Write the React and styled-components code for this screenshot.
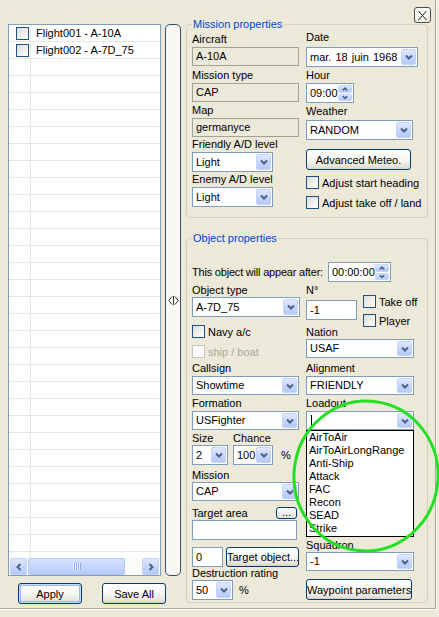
import styled, { createGlobalStyle } from "styled-components";

const flights = ["Flight001 - A-10A", "Flight002 - A-7D_75"];
const loadouts = [
  "AirToAir",
  "AirToAirLongRange",
  "Anti-Ship",
  "Attack",
  "FAC",
  "Recon",
  "SEAD",
  "Strike",
];

function Chevron({ dir = "down", small }) {
  const vertical = dir === "down" || dir === "up";
  const pts = {
    down: "1,1.5 4,4.5 7,1.5",
    up: "1,4.5 4,1.5 7,4.5",
    left: "4.5,1 1.5,4 4.5,7",
    right: "1.5,1 4.5,4 1.5,7",
  }[dir];
  const w = vertical ? 8 : 6;
  const h = vertical ? 6 : 8;
  return (
    <svg
      width={small ? w * 0.75 : w}
      height={small ? h * 0.75 : h}
      viewBox={`0 0 ${w} ${h}`}
    >
      <polyline points={pts} fill="none" stroke="#4d6185" strokeWidth="2" />
    </svg>
  );
}

function Combo({ value, w = 108, h = 19, mt = 0, children }) {
  return (
    <ComboBox $w={w} $h={h} $mt={mt}>
      <ComboText $h={h}>{value}</ComboText>
      <DropButton>
        <Chevron />
      </DropButton>
      {children}
    </ComboBox>
  );
}

function Spinner({ value, w, h = 20, mt = 0 }) {
  return (
    <ComboBox $w={w} $h={h} $mt={mt}>
      <ComboText $h={h}>{value}</ComboText>
      <SpinButtons>
        <SpinHalf>
          <Chevron dir="up" small />
        </SpinHalf>
        <SpinHalf>
          <Chevron dir="down" small />
        </SpinHalf>
      </SpinButtons>
    </ComboBox>
  );
}

function Check({ label, disabled, mt = 0 }) {
  return (
    <CheckRow $mt={mt} $disabled={disabled}>
      <CheckBox $disabled={disabled} />
      {label}
    </CheckRow>
  );
}

export default function App() {
  const rows = Array.from({ length: 32 }, (_, i) => flights[i] || "");

  return (
    <>
      <GlobalStyle />
      <Page>
        <Window>
          <LeftPane>
            <ListArea>
              <ListBox>
                <Rows>
                  {rows.map((name, i) => (
                    <Row key={i}>
                      <CheckCell>{name && <CheckBox />}</CheckCell>
                      <NameCell>{name}</NameCell>
                    </Row>
                  ))}
                </Rows>
                <HScroll>
                  <ScrollArrow>
                    <Chevron dir="left" />
                  </ScrollArrow>
                  <ScrollThumb>
                    <Grip />
                  </ScrollThumb>
                  <ScrollArrow $end>
                    <Chevron dir="right" />
                  </ScrollArrow>
                </HScroll>
              </ListBox>
              <Splitter>
                <svg width="11" height="9" viewBox="0 0 11 9">
                  <polyline
                    points="4,0.5 0.8,4.5 4,8.5"
                    fill="none"
                    stroke="#333"
                    strokeWidth="1"
                  />
                  <line x1="5.5" y1="0" x2="5.5" y2="9" stroke="#333" />
                  <polyline
                    points="7,0.5 10.2,4.5 7,8.5"
                    fill="none"
                    stroke="#333"
                    strokeWidth="1"
                  />
                </svg>
              </Splitter>
            </ListArea>
            <ButtonRow>
              <XpButton $w={64} $h={21} $default>
                Apply
              </XpButton>
              <XpButton $w={64} $h={21}>
                Save All
              </XpButton>
            </ButtonRow>
          </LeftPane>

          <RightPane>
            <CloseRow>
              <CloseButton>
                <svg width="11" height="11" viewBox="0 0 11 11">
                  <line x1="1.5" y1="1" x2="9.5" y2="10" stroke="#222" />
                  <line x1="9.5" y1="1" x2="1.5" y2="10" stroke="#222" />
                </svg>
              </CloseButton>
            </CloseRow>

            <Group $mt={-5} $pb={8}>
              <Legend>Mission properties</Legend>
              <Columns>
                <Col $w={107}>
                  <Label $mt={2}>Aircraft</Label>
                  <Field $mt={1} $w={107} $h={19} $readOnly>
                    A-10A
                  </Field>
                  <Label $mt={3}>Mission type</Label>
                  <Field $mt={1} $w={107} $h={19} $readOnly>
                    CAP
                  </Field>
                  <Label $mt={2}>Map</Label>
                  <Field $mt={1} $w={107} $h={19} $readOnly>
                    germanyce
                  </Field>
                  <Label $mt={1}>Friendly A/D level</Label>
                  <Combo value="Light" w={81} h={20} mt={1} />
                  <Label $mt={1}>Enemy A/D level</Label>
                  <Combo value="Light" w={81} h={20} mt={1} />
                </Col>
                <Col $w={112}>
                  <Label>Date</Label>
                  <Combo
                    value={<Spaced>mar. 18 juin 1968</Spaced>}
                    w={112}
                    h={20}
                    mt={3}
                  />
                  <Label $mt={2}>Hour</Label>
                  <Spinner value="09:00" w={48} h={20} mt={1} />
                  <Label $mt={2}>Weather</Label>
                  <Combo value="RANDOM" w={107} h={20} mt={2} />
                  <XpButton $w={105} $h={21} $mt={9}>
                    Advanced Meteo.
                  </XpButton>
                  <Check label="Adjust start heading" mt={6} />
                  <Check label="Adjust take off / land" mt={7} />
                </Col>
              </Columns>
            </Group>

            <Group $mt={14} $pb={2}>
              <Legend>Object properties</Legend>
              <AppearRow>
                <Tight>This object will appear after:</Tight>
                <Spinner value="00:00:00" w={63} h={20} />
              </AppearRow>
              <Columns $mt={2}>
                <Col $w={107}>
                  <Label>Object type</Label>
                  <Combo value="A-7D_75" w={108} h={20} />
                  <Check label="Navy a/c" mt={8} />
                  <Check label="ship / boat" mt={7} disabled />
                  <Label $mt={4}>Callsign</Label>
                  <Combo value="Showtime" w={107} mt={1} />
                  <Label $mt={2}>Formation</Label>
                  <Combo value="USFighter" w={107} mt={1} />
                  <SizeGrid>
                    <Label>Size</Label>
                    <Label>Chance</Label>
                    <span />
                    <Combo value="2" w={36} h={20} />
                    <Combo value="100" w={40} h={20} />
                    <Unit>%</Unit>
                  </SizeGrid>
                  <Label $mt={4}>Mission</Label>
                  <Combo value="CAP" w={107} />
                  <TargetRow>
                    Target area
                    <SmallButton>...</SmallButton>
                  </TargetRow>
                  <Field $w={105} $h={20} />
                  <InlineRow $mt={7}>
                    <Field $w={31} $h={20}>
                      0
                    </Field>
                    <XpButton $w={73} $h={20}>
                      Target object...
                    </XpButton>
                  </InlineRow>
                  <Label>Destruction rating</Label>
                  <InlineRow>
                    <Combo value="50" w={41} h={20} />
                    <Unit>%</Unit>
                  </InlineRow>
                </Col>
                <Col $w={108}>
                  <NumberRow>
                    <NumberBlock>
                      <Label>N°</Label>
                      <Field $mt={3} $w={51} $h={20}>
                        -1
                      </Field>
                    </NumberBlock>
                    <CheckStack>
                      <Check label="Take off" />
                      <Check label="Player" mt={6} />
                    </CheckStack>
                  </NumberRow>
                  <Label $mt={-1}>Nation</Label>
                  <Combo value="USAF" />
                  <Label $mt={4}>Alignment</Label>
                  <Combo value="FRIENDLY" mt={1} />
                  <Label $mt={2}>Loadout</Label>
                  <Combo value={<Caret />} mt={1}>
                    <DropList>
                      {loadouts.map((item) => (
                        <DropItem key={item}>{item}</DropItem>
                      ))}
                    </DropList>
                  </Combo>
                  <Label $mt={109}>Squadron</Label>
                  <Combo value="-1" />
                  <XpButton $w={106} $h={21} $mt={8}>
                    Waypoint parameters
                  </XpButton>
                </Col>
              </Columns>
            </Group>
          </RightPane>
        </Window>

        <Annotation width="439" height="617" viewBox="0 0 439 617">
          <ellipse
            cx="366"
            cy="476"
            rx="72"
            ry="75"
            transform="rotate(6 366 476)"
            fill="none"
            stroke="#24e024"
            strokeWidth="3"
          />
        </Annotation>
      </Page>
    </>
  );
}

const GlobalStyle = createGlobalStyle`
  html, body {
    margin: 0;
    padding: 0;
    background: #ece9d8;
  }
  body {
    font-family: "Liberation Sans", Arial, sans-serif;
    font-size: 11px;
    color: #000;
  }
  * {
    box-sizing: border-box;
  }
`;

const Page = styled.div`
  position: relative;
  width: 439px;
  height: 617px;
  overflow: hidden;
`;

const Window = styled.div`
  display: flex;
  width: 436px;
  height: 609px;
  padding: 7px 0 0 8px;
  border-right: 1px solid #aca899;
  border-bottom: 1px solid #aca899;
  box-shadow: 1px 1px 0 #fff;
`;

const LeftPane = styled.div`
  display: flex;
  flex-direction: column;
  width: 173px;
  flex-shrink: 0;
  padding-top: 17px;
`;

const ListArea = styled.div`
  display: flex;
  gap: 4px;
  height: 552px;
`;

const ListBox = styled.div`
  display: flex;
  flex-direction: column;
  width: 153px;
  height: 100%;
  border: 1px solid #7f9db9;
  background: #fff;
`;

const Rows = styled.div`
  flex: 1;
  overflow: hidden;
`;

const Row = styled.div`
  display: flex;
  height: 17px;
  border-bottom: 1px solid #e8e7df;
`;

const CheckCell = styled.div`
  display: flex;
  align-items: center;
  width: 22px;
  padding-left: 7px;
  border-right: 1px solid #e8e7df;
`;

const NameCell = styled.div`
  flex: 1;
  padding-left: 5px;
  line-height: 16px;
  white-space: nowrap;
`;

const HScroll = styled.div`
  display: flex;
  height: 17px;
  padding: 0 1px;
  background: #fbfbf8;
`;

const ScrollArrow = styled.div`
  display: flex;
  align-items: center;
  justify-content: center;
  width: 17px;
  margin-left: ${(p) => (p.$end ? "auto" : "0")};
  border: 1px solid #c3d3fd;
  border-radius: 2px;
  background: linear-gradient(180deg, #e0e8fe 0%, #c5d5fc 55%, #b6c9f6 100%);
`;

const ScrollThumb = styled.div`
  display: flex;
  align-items: center;
  justify-content: center;
  width: 97px;
  margin-left: 1px;
  border: 1px solid #b3c8f7;
  border-radius: 2px;
  background: linear-gradient(180deg, #d6e1fd 0%, #c4d4fc 55%, #b8cbf8 100%);
`;

const Grip = styled.div`
  width: 8px;
  height: 7px;
  background: repeating-linear-gradient(
    90deg,
    #eef3fe 0 1px,
    #8ca8e8 1px 2px
  );
`;

const Splitter = styled.div`
  display: flex;
  align-items: center;
  justify-content: center;
  width: 16px;
  height: 100%;
  border: 1px solid #34506f;
  border-radius: 5px;
  background: #f8f7f2;
`;

const ButtonRow = styled.div`
  display: flex;
  gap: 20px;
  margin-top: 7px;
  padding-left: 10px;
`;

const XpButton = styled.button`
  flex-shrink: 0;
  width: ${(p) => p.$w}px;
  height: ${(p) => p.$h}px;
  margin-top: ${(p) => p.$mt || 0}px;
  padding: 0;
  font-family: inherit;
  font-size: 11px;
  color: #000;
  white-space: nowrap;
  overflow: hidden;
  border: 1px solid #003c74;
  border-radius: 3px;
  background: linear-gradient(
    180deg,
    #ffffff 0%,
    #f5f4ef 55%,
    #e4e2d9 88%,
    #d6d0c5 100%
  );
  box-shadow: ${(p) =>
    p.$default ? "inset 0 0 0 1px #c7daf7, inset 0 0 0 2px #98b8ea" : "none"};
`;

const RightPane = styled.div`
  display: flex;
  flex-direction: column;
  width: 246px;
  margin-left: 5px;
`;

const CloseRow = styled.div`
  display: flex;
  justify-content: flex-end;
  padding-right: 1px;
`;

const CloseButton = styled.div`
  display: flex;
  align-items: center;
  justify-content: center;
  width: 17px;
  height: 16px;
  border: 1px solid #4b4b4b;
  border-radius: 3px;
  background: linear-gradient(180deg, #ffffff, #eceae2);
`;

const Group = styled.fieldset`
  width: 242px;
  min-width: 0;
  margin: ${(p) => p.$mt}px 0 0 0;
  padding: 0 5px ${(p) => p.$pb}px 5px;
  border: 1px solid #d0d0bf;
  border-radius: 4px;
`;

const Legend = styled.legend`
  padding: 0 1px;
  font-size: 11px;
  line-height: 13px;
  color: #0046d5;
`;

const Columns = styled.div`
  display: flex;
  gap: 7px;
  margin-top: ${(p) => p.$mt || 0}px;
`;

const Col = styled.div`
  display: flex;
  flex-direction: column;
  align-items: flex-start;
  width: ${(p) => p.$w}px;
`;

const Label = styled.div`
  margin-top: ${(p) => p.$mt || 0}px;
  line-height: 13px;
  white-space: nowrap;
`;

const Field = styled.div`
  flex-shrink: 0;
  width: ${(p) => p.$w}px;
  height: ${(p) => p.$h}px;
  margin-top: ${(p) => p.$mt || 0}px;
  padding-left: 3px;
  line-height: ${(p) => p.$h - 2}px;
  border: 1px solid ${(p) => (p.$readOnly ? "#a3a294" : "#7f9db9")};
  background: ${(p) => (p.$readOnly ? "#ebe9da" : "#fff")};
  white-space: nowrap;
`;

const ComboBox = styled.div`
  position: relative;
  display: flex;
  flex-shrink: 0;
  width: ${(p) => p.$w}px;
  height: ${(p) => p.$h}px;
  margin-top: ${(p) => p.$mt}px;
  padding: 1px;
  border: 1px solid #7f9db9;
  background: #fff;
`;

const ComboText = styled.div`
  display: flex;
  align-items: center;
  flex: 1;
  min-width: 0;
  padding-left: 2px;
  line-height: ${(p) => p.$h - 4}px;
  white-space: nowrap;
  overflow: hidden;
`;

const Spaced = styled.span`
  word-spacing: 1px;
`;

const Tight = styled.span`
  letter-spacing: -0.2px;
`;

const DropButton = styled.div`
  display: flex;
  align-items: center;
  justify-content: center;
  width: 15px;
  flex-shrink: 0;
  border: 1px solid #c3d3fd;
  border-radius: 2px;
  background: linear-gradient(180deg, #e0e8fe 0%, #c5d5fc 55%, #b6c9f6 100%);
`;

const SpinButtons = styled.div`
  display: flex;
  flex-direction: column;
  gap: 1px;
  width: 14px;
  flex-shrink: 0;
`;

const SpinHalf = styled.div`
  display: flex;
  flex: 1;
  align-items: center;
  justify-content: center;
  border: 1px solid #c3d3fd;
  border-radius: 2px;
  background: linear-gradient(180deg, #e0e8fe 0%, #c5d5fc 55%, #b6c9f6 100%);
`;

const Caret = styled.span`
  display: block;
  width: 1px;
  height: 12px;
  margin-left: 1px;
  background: #000;
`;

const DropList = styled.div`
  position: absolute;
  top: calc(100% + 1px);
  left: -1px;
  z-index: 2;
  width: 108px;
  padding: 0 0 1px 2px;
  border: 1px solid #000;
  background: #fff;
`;

const DropItem = styled.div`
  line-height: 13px;
  white-space: nowrap;
`;

const CheckRow = styled.div`
  display: flex;
  align-items: center;
  gap: 3px;
  height: 13px;
  margin-top: ${(p) => p.$mt}px;
  color: ${(p) => (p.$disabled ? "#aca899" : "#000")};
  white-space: nowrap;
`;

const CheckBox = styled.span`
  display: block;
  flex-shrink: 0;
  width: 13px;
  height: 13px;
  border: 1px solid ${(p) => (p.$disabled ? "#cac8bb" : "#1c5180")};
  background: ${(p) =>
    p.$disabled ? "#fff" : "linear-gradient(135deg, #dcdcd7, #ffffff)"};
`;

const AppearRow = styled.div`
  display: flex;
  align-items: center;
  gap: 5px;
  height: 20px;
  margin-top: 17px;
  white-space: nowrap;
`;

const SizeGrid = styled.div`
  display: grid;
  grid-template-columns: 36px 40px auto;
  column-gap: 5px;
  align-items: center;
  margin-top: 2px;
`;

const Unit = styled.span`
  margin-left: 3px;
`;

const TargetRow = styled.div`
  display: flex;
  align-items: center;
  justify-content: space-between;
  width: 105px;
  height: 14px;
  margin-top: 5px;
`;

const SmallButton = styled.div`
  width: 21px;
  height: 12px;
  line-height: 8px;
  text-align: center;
  border: 1px solid #003c74;
  border-radius: 3px;
  background: linear-gradient(180deg, #ffffff, #e4e2d9);
`;

const InlineRow = styled.div`
  display: flex;
  align-items: center;
  gap: 3px;
  margin-top: ${(p) => p.$mt || 0}px;
`;

const NumberRow = styled.div`
  display: flex;
  gap: 6px;
`;

const NumberBlock = styled.div`
  display: flex;
  flex-direction: column;
`;

const CheckStack = styled.div`
  display: flex;
  flex-direction: column;
  padding-top: 11px;
`;

const Annotation = styled.svg`
  position: absolute;
  top: 0;
  left: 0;
  z-index: 5;
  pointer-events: none;
`;
